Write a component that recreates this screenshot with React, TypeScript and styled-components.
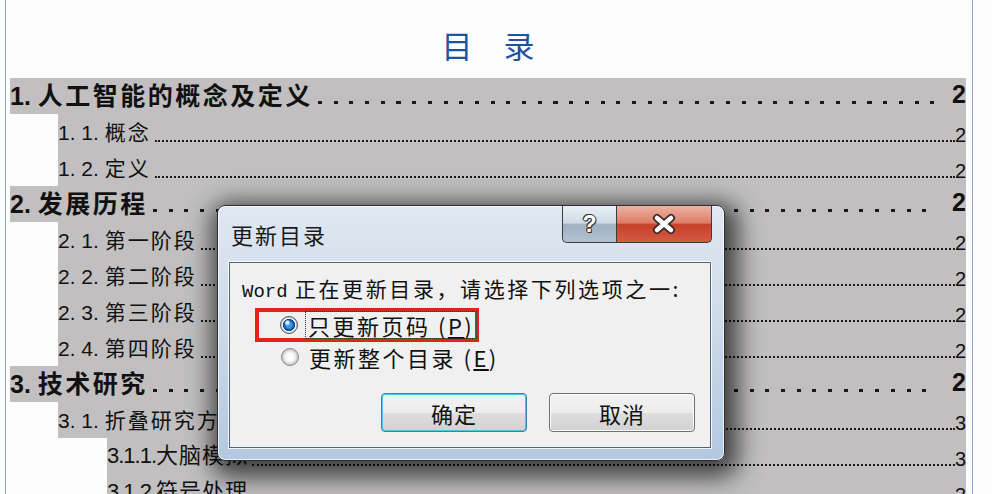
import React from 'react'
import styled, { createGlobalStyle } from 'styled-components';

const GlobalStyle = createGlobalStyle`
    html, body {
        margin: 0;
        padding: 0;
        background: #fdfdfe;
    }
`;

const Root = styled.div`
    position: relative;
    width: 992px;
    height: 494px;
    overflow: hidden;
    background: #fdfdfe;
    font-family: "Liberation Sans", "Noto Sans CJK SC", sans-serif;
    color: #111;
`;

const Sheet = styled.div`
    box-sizing: border-box;
    width: 968px;
    height: 100%;
    margin-left: 5px;
    padding: 0 6px 0 4px;
    border-left: 1px solid #8ea4d0;
    border-right: 1px solid #8ea4d0;
`;

const Heading = styled.h1`
    margin: 0;
    height: 78px;
    box-sizing: border-box;
    padding-top: 10px;
    display: flex;
    align-items: center;
    justify-content: center;
    font-family: "Noto Sans CJK SC", sans-serif;
    font-weight: normal;
    font-size: 31px;
    color: #1f52a3;
`;

const Row = styled.div<{ $indent: number }>`
    height: 36px;
    display: flex;
    padding-left: ${p => p.$indent}px;
`;

const RowBody = styled.div`
    flex: 1;
    display: flex;
    align-items: center;
    background: #c1bfc0;
    min-width: 0;
`;

const Title = styled.span<{ $level: number }>`
    white-space: nowrap;
    font-weight: ${p => p.$level === 1 ? 'bold' : 'normal'};
    font-size: ${p => p.$level === 1 ? 25 : p.$level === 2 ? 21 : 22}px;
    letter-spacing: ${p => p.$level === 1 ? 2.5 : p.$level === 2 ? 2 : 1}px;
    line-height: 1;
`;

const Number = styled.span<{ $level: number }>`
    letter-spacing: ${p => p.$level === 3 ? -1 : 0}px;
`;

const DashLeader = styled.span`
    flex: 1;
    align-self: flex-end;
    height: 3px;
    margin: 0 18px 10px 5px;
    background: repeating-linear-gradient(to right, #1a1a1a 0 4px, transparent 4px 15.7px);
`;

const DotLeader = styled.span`
    flex: 1;
    align-self: flex-end;
    margin: 0 0 8px 4px;
    border-bottom: 2px dotted #1a1a1a;
`;

const Page = styled.span<{ $level: number }>`
    align-self: flex-end;
    line-height: 1;
    font-weight: ${p => p.$level === 1 ? 'bold' : 'normal'};
    font-size: ${p => p.$level === 1 ? 25 : 20}px;
    margin-bottom: ${p => p.$level === 1 ? 7 : 5}px;
`;

const Overlay = styled.div`
    position: absolute;
    left: 217px;
    top: 205px;
    width: 508px;
    height: 256px;
    box-sizing: border-box;
    display: flex;
    flex-direction: column;
    border: 1px solid #2e2e2e;
    border-radius: 8px;
    background: linear-gradient(180deg, #dfe8f2 0%, #d2deeb 35%, #b3c8e0 100%);
    box-shadow: inset 0 0 0 1px rgba(255,255,255,0.75), 4px 7px 24px 9px rgba(0,0,0,0.68);
    font-family: "Noto Sans CJK SC", sans-serif;
`;

const TitleBar = styled.div`
    height: 56px;
    display: flex;
    justify-content: space-between;
    align-items: flex-start;
    padding: 0 12px 0 13px;
`;

const DialogTitle = styled.div`
    padding-top: 13px;
    font-size: 22px;
    letter-spacing: 2px;
    line-height: 30px;
    color: #1a1a1a;
`;

const Controls = styled.div`
    display: flex;
`;

const HelpButton = styled.div`
    width: 54px;
    height: 37px;
    box-sizing: border-box;
    border: 1px solid #3b3b3b;
    border-top: none;
    border-right: none;
    border-radius: 0 0 0 5px;
    background: linear-gradient(180deg, #e9eff5 0%, #d0dbe6 46%, #9fb0c3 52%, #b3c2d2 100%);
    display: flex;
    align-items: center;
    justify-content: center;
    font-family: "Liberation Sans", sans-serif;
    font-weight: bold;
    font-size: 23px;
    color: #fff;
    text-shadow: -1px 0 #333, 1px 0 #333, 0 -1px #333, 0 1px #333, 1px 1px #333, -1px -1px #333;
`;

const CloseButton = styled.div`
    width: 96px;
    height: 37px;
    box-sizing: border-box;
    border: 1px solid #3b3b3b;
    border-top: none;
    border-radius: 0 0 5px 0;
    background: linear-gradient(180deg, #eeb1a2 0%, #de7f69 46%, #c7412a 52%, #d45b42 100%);
    display: flex;
    align-items: center;
    justify-content: center;
`;

const Panel = styled.div`
    flex: 1;
    margin: 0 13px 12px 11px;
    background: #f0f0f0;
    border: 1px solid #56636f;
    box-shadow: 0 0 0 1px rgba(255,255,255,0.8);
    padding: 12px 15px 0 12px;
    display: flex;
    flex-direction: column;
`;

const Message = styled.div`
    font-size: 21px;
    letter-spacing: 2.6px;
    line-height: 26px;
    white-space: nowrap;
    color: #111;
`;

const Mono = styled.span`
    font-family: "Liberation Mono", monospace;
    font-size: 19px;
    letter-spacing: 0;
`;

const Highlight = styled.div`
    margin: 3px 0 0 13px;
    width: 224px;
    height: 34px;
    box-sizing: border-box;
    border: 4px solid #e2231a;
    display: flex;
    align-items: center;
    padding-left: 21px;
`;

const Option = styled.div<{ $plain?: boolean }>`
    display: flex;
    align-items: center;
    height: 30px;
    padding-left: ${p => p.$plain ? 39 : 0}px;
`;

const Radio = styled.span<{ $checked?: boolean }>`
    width: 18px;
    height: 18px;
    box-sizing: border-box;
    border-radius: 50%;
    border: 1px solid ${p => p.$checked ? '#4f5a66' : '#8c8c8c'};
    background: ${p => p.$checked
        ? 'radial-gradient(circle at 40% 36%, #d2f0ff 0 1.5px, transparent 3px), radial-gradient(circle at 50% 50%, #3a97e6 0 2.5px, #1467bd 4.5px, #0a3f80 5.8px, #f4f6f8 6.3px, #e9edf1 7px, #bcc6d0 8px)'
        : 'radial-gradient(circle at 50% 50%, #fbfbfb 0 4px, #e4e4e4 6px, #c4c4c4 8px)'};
    margin-right: 8px;
    flex-shrink: 0;
`;

const OptionLabel = styled.span<{ $focused?: boolean }>`
    font-size: 22px;
    letter-spacing: 2.5px;
    line-height: 26px;
    padding: 0 2px;
    white-space: nowrap;
    outline: ${p => p.$focused ? '1px dotted #333' : 'none'};
`;

const ButtonRow = styled.div`
    display: flex;
    justify-content: flex-end;
    gap: 22px;
    margin-top: 21px;
`;

const Button = styled.div<{ $primary?: boolean }>`
    width: 146px;
    height: 39px;
    box-sizing: border-box;
    border-radius: 4px;
    border: 1px solid ${p => p.$primary ? '#3c7fb1' : '#707070'};
    box-shadow: ${p => p.$primary ? 'inset 0 0 0 1px #4fc3f0' : 'inset 0 0 0 1px #fafafa'};
    background: linear-gradient(180deg, #f3f3f3 0%, #ececec 50%, #dedede 51%, #d2d2d2 100%);
    display: flex;
    align-items: center;
    justify-content: center;
    font-size: 22px;
    letter-spacing: 1px;
    color: #111;
`;

type Entry = { level: 1 | 2 | 3, num: string, title: string, page: string };

const entries: Entry[] = [
    { level: 1, num: '1. ', title: '人工智能的概念及定义', page: '2' },
    { level: 2, num: '1. 1. ', title: '概念', page: '2' },
    { level: 2, num: '1. 2. ', title: '定义', page: '2' },
    { level: 1, num: '2. ', title: '发展历程', page: '2' },
    { level: 2, num: '2. 1. ', title: '第一阶段', page: '2' },
    { level: 2, num: '2. 2. ', title: '第二阶段', page: '2' },
    { level: 2, num: '2. 3. ', title: '第三阶段', page: '2' },
    { level: 2, num: '2. 4. ', title: '第四阶段', page: '2' },
    { level: 1, num: '3. ', title: '技术研究', page: '2' },
    { level: 2, num: '3. 1. ', title: '折叠研究方法', page: '3' },
    { level: 3, num: '3.1.1.', title: '大脑模拟', page: '3' },
    { level: 3, num: '3.1.2.', title: '符号处理', page: '3' },
];

const indents = { 1: 0, 2: 48, 3: 97 };

const TocRow = ({ level, num, title, page }: Entry) => (
    <Row $indent={indents[level]}>
        <RowBody>
            <Title $level={level}><Number $level={level}>{num}</Number>{title}</Title>
            {level === 1 ? <DashLeader /> : <DotLeader />}
            <Page $level={level}>{page}</Page>
        </RowBody>
    </Row>
);

const CloseIcon = () => (
    <svg width="30" height="22" viewBox="0 0 30 22">
        <path d="M8 5 L22 17 M22 5 L8 17" stroke="#3a2a28" strokeWidth="8" strokeLinecap="round" />
        <path d="M8 5 L22 17 M22 5 L8 17" stroke="#fff" strokeWidth="4.5" strokeLinecap="round" />
    </svg>
);

const App = () => {
    return (
        <Root>
            <GlobalStyle />
            <Sheet>
                <Heading>目　录</Heading>
                {entries.map(e => <TocRow key={e.num + e.title} {...e} />)}
            </Sheet>
            <Overlay>
                <TitleBar>
                    <DialogTitle>更新目录</DialogTitle>
                    <Controls>
                        <HelpButton>?</HelpButton>
                        <CloseButton><CloseIcon /></CloseButton>
                    </Controls>
                </TitleBar>
                <Panel>
                    <Message><Mono>Word</Mono> 正在更新目录，请选择下列选项之一:</Message>
                    <Highlight>
                        <Option>
                            <Radio $checked />
                            <OptionLabel $focused>只更新页码 (<u>P</u>)</OptionLabel>
                        </Option>
                    </Highlight>
                    <Option $plain>
                        <Radio />
                        <OptionLabel>更新整个目录 (<u>E</u>)</OptionLabel>
                    </Option>
                    <ButtonRow>
                        <Button $primary>确定</Button>
                        <Button>取消</Button>
                    </ButtonRow>
                </Panel>
            </Overlay>
        </Root>
    )
}

export default App;
